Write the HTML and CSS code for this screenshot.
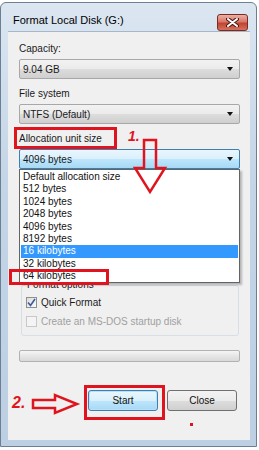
FILE: index.html
```html
<!DOCTYPE html>
<html lang="en">
<head>
    <meta charset="UTF-8">
    <meta name="viewport" content="width=device-width, initial-scale=1.0">
    <title>Format Local Disk (G:)</title>
    <link rel="stylesheet" href="styles.css">
</head>
<body>
    <div class="page">
        <div class="window">
            <div class="titlebar">
                <span class="title">Format Local Disk (G:)</span>
                <span class="close-x">
                    <svg width="13" height="9" viewBox="0 0 13 9">
                        <path d="M2 1 L11 8 M11 1 L2 8" stroke="#4a1810" stroke-width="4" stroke-linecap="round"/>
                        <path d="M2 1 L11 8 M11 1 L2 8" stroke="#fff" stroke-width="2" stroke-linecap="round"/>
                    </svg>
                </span>
            </div>
            <div class="client">
                <div class="field-label">Capacity:</div>
                <div class="combo"><span>9.04 GB</span><i class="caret"></i></div>

                <div class="field-label">File system</div>
                <div class="combo"><span>NTFS (Default)</span><i class="caret"></i></div>

                <div class="field-label">Allocation unit size</div>
                <div class="combo combo-open">
                    <span>4096 bytes</span><i class="caret"></i>
                    <!-- open drop-down list, covers the volume label part -->
                    <ul class="dropdown">
                        <li>Default allocation size</li>
                        <li>512 bytes</li>
                        <li>1024 bytes</li>
                        <li>2048 bytes</li>
                        <li>4096 bytes</li>
                        <li>8192 bytes</li>
                        <li class="selected">16 kilobytes</li>
                        <li>32 kilobytes</li>
                        <li>64 kilobytes</li>
                    </ul>
                </div>

                <fieldset class="options">
                    <legend>Format options</legend>
                    <div class="check">
                        <span class="box">
                            <svg width="9" height="9" viewBox="0 0 9 9">
                                <path d="M1 4.5 L3.5 7.5 L8 1" fill="none" stroke="#3b5a9a" stroke-width="1.6"/>
                            </svg>
                        </span>
                        Quick Format
                    </div>
                    <div class="check disabled">
                        <span class="box"></span>
                        Create an MS-DOS startup disk
                    </div>
                </fieldset>

                <div class="progress"></div>

                <div class="buttons">
                    <div class="btn btn-default">Start</div>
                    <div class="btn">Close</div>
                </div>
            </div>
        </div>

        <!-- red tutorial marks drawn over the screenshot -->
        <svg class="marks" width="259" height="450" viewBox="0 0 259 450">
            <rect x="15.5" y="128.5" width="100" height="19" fill="none" stroke="#e0141e" stroke-width="3"/>
            <polygon points="144,140 156,140 156,168 165,168 150,192 135,168 144,168" fill="none" stroke="#e0141e" stroke-width="2.5"/>
            <rect x="10.5" y="270.5" width="97" height="13" fill="none" stroke="#e0141e" stroke-width="3"/>
            <polygon points="33,400 55,400 55,395 77,404 55,413 55,408 33,408" fill="none" stroke="#e0141e" stroke-width="2.5"/>
            <rect x="85.5" y="386.5" width="78" height="32" fill="none" stroke="#e0141e" stroke-width="3"/>
            <rect x="190" y="423" width="3" height="3" fill="#e0141e"/>
        </svg>
        <span class="step step-1">1.</span>
        <span class="step step-2">2.</span>
    </div>
</body>
</html>
```

FILE: styles.css
```css
body {
    margin: 0;
    background-color: #fff;
    font-family: "Liberation Sans", Arial, sans-serif;
    font-size: 10px;
    color: #1a1a1a;
}
.page {
    position: relative;
    width: 259px;
    height: 450px;
    overflow: hidden;
}
.window {
    margin-top: 2px;
    width: 255px;
    height: 443px;
    border: 1px solid #6d7f92;
    border-radius: 6px 6px 0 0;
    background: linear-gradient(to bottom, #dbe6f1 0%, #c4d5e7 40%, #bccfe3 100%);
    display: flex;
    flex-direction: column;
}
.titlebar {
    height: 28px;
    display: flex;
    align-items: center;
    padding: 0 8px 0 12px;
}
.title {
    flex: 1;
    font-size: 11px;
    color: #000;
    padding-top: 6px;
}
.close-x {
    width: 29px;
    height: 15px;
    margin-top: 11px;
    border: 1px solid #7c2a1f;
    border-radius: 3px;
    background: linear-gradient(to bottom, #eab0a4 0%, #d7796a 45%, #c1442f 55%, #d2735f 100%);
    display: flex;
    align-items: center;
    justify-content: center;
}
.client {
    margin: 0 6px 0 7px;
    height: 409px;
    box-sizing: border-box;
    padding: 10px 10px 0 11px;
    background-color: #f0f0f0;
    border-top: 1px solid #a7b7c9;
}
.field-label {
    height: 14px;
    line-height: 14px;
    margin-bottom: 3px;
}
.combo {
    position: relative;
    height: 20px;
    box-sizing: border-box;
    border: 1px solid #a8a8a8;
    border-radius: 2px;
    background: linear-gradient(to bottom, #f2f2f2 0%, #ebebeb 50%, #dddddd 51%, #cfcfcf 100%);
    display: flex;
    align-items: center;
    padding: 0 6px 0 3px;
    margin-bottom: 8px;
}
.combo span {
    flex: 1;
}
.caret {
    width: 0;
    height: 0;
    border-left: 3px solid transparent;
    border-right: 3px solid transparent;
    border-top: 4px solid #111;
}
.combo-open {
    border-color: #3c7fb1;
    background: linear-gradient(to bottom, #eaf6fd 0%, #d9f0fc 50%, #bee6fd 51%, #a7d9f5 100%);
}
.dropdown {
    position: absolute;
    top: 19px;
    left: -1px;
    width: 221px;
    height: 114px;
    box-sizing: border-box;
    margin: 0;
    padding: 1px 1px 0;
    list-style: none;
    background-color: #fff;
    border: 1px solid #646464;
    box-shadow: 2px 2px 2px rgba(0, 0, 0, 0.25);
    z-index: 2;
}
.dropdown li {
    height: 12.4px;
    line-height: 12.4px;
    padding-left: 2px;
    color: #111;
    white-space: nowrap;
}
.dropdown li.selected {
    background-color: #3399ff;
    color: #fff;
}
.options {
    margin: 109px 1px 0 2px;
    padding: 3px 4px 7px;
    border: 1px solid #d5dfe5;
    border-radius: 3px;
}
.options legend {
    padding: 0 1px;
    height: 14px;
    line-height: 14px;
}
.check {
    height: 14px;
    display: flex;
    align-items: center;
    gap: 4px;
    margin-bottom: 5px;
}
.check:last-child {
    margin-bottom: 0;
}
.box {
    width: 11px;
    height: 11px;
    box-sizing: border-box;
    border: 1px solid #8e8f8f;
    background: linear-gradient(135deg, #dcdcdc, #fafafa);
    display: flex;
    align-items: center;
    justify-content: center;
}
.check.disabled {
    color: #a0a0a0;
}
.check.disabled .box {
    border-color: #c8c8c8;
    background: #f4f4f4;
}
.progress {
    margin-top: 14px;
    height: 12px;
    box-sizing: border-box;
    border: 1px solid #b2b2b2;
    border-radius: 2px;
    background: linear-gradient(to bottom, #f5f5f5 0%, #e6e6e6 50%, #d9d9d9 100%);
}
.buttons {
    margin-top: 28px;
    display: flex;
    justify-content: flex-end;
    gap: 9px;
    padding-right: 3px;
}
.btn {
    width: 70px;
    height: 21px;
    line-height: 19px;
    box-sizing: border-box;
    text-align: center;
    border: 1px solid #707070;
    border-radius: 3px;
    background: linear-gradient(to bottom, #f2f2f2 0%, #ebebeb 50%, #dddddd 51%, #cfcfcf 100%);
    color: #111;
}
.btn-default {
    border-color: #3c7fb1;
    background: linear-gradient(to bottom, #eaf6fd 0%, #d9f0fc 50%, #bee6fd 51%, #a7d9f5 100%);
    box-shadow: inset 0 0 0 1px #b9e0f7;
}
.marks {
    position: absolute;
    top: 0;
    left: 0;
    z-index: 3;
}
.step {
    position: absolute;
    z-index: 3;
    color: #e0141e;
    font-weight: bold;
    font-style: italic;
    line-height: 1;
}
.step-1 {
    left: 128px;
    top: 129px;
    font-size: 14px;
}
.step-2 {
    left: 12px;
    top: 395px;
    font-size: 16px;
}
```
